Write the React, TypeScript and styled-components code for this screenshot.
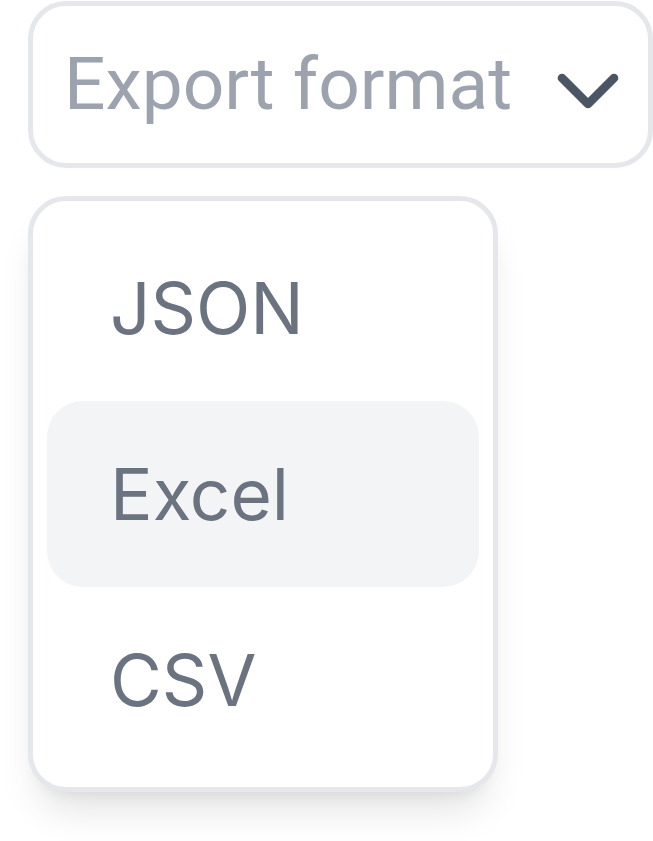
import styled, { createGlobalStyle } from 'styled-components';
import { ChevronDown } from 'lucide-react';

const GlobalStyle = createGlobalStyle`
  html, body {
    margin: 0;
    padding: 0;
    background: #ffffff;
  }
`;

const options = ['JSON', 'Excel', 'CSV'];

const Page = styled.div`
  min-height: 100vh;
  box-sizing: border-box;
  padding: 1px 0 0 28px;
  display: flex;
  flex-direction: column;
  gap: 28px;
  font-family: Inter, "Noto Sans", sans-serif;
`;

const Trigger = styled.button`
  box-sizing: border-box;
  width: 625px;
  height: 167px;
  border: 5px solid #e5e7eb;
  border-radius: 38px;
  background: #ffffff;
  display: flex;
  align-items: center;
  justify-content: space-between;
  padding: 0 8px 0 31px;
  cursor: pointer;
`;

const Placeholder = styled.span`
  font-family: Roboto, "Liberation Sans", sans-serif;
  font-size: 73px;
  color: #9ca3af;
  line-height: 1;
`;

const Chevron = styled(ChevronDown)`
  color: #4b5563;
  flex-shrink: 0;
  margin-top: 12px;
`;

const Menu = styled.ul`
  box-sizing: border-box;
  width: 470px;
  margin: 0;
  padding: 14px;
  list-style: none;
  border: 5px solid #e5e7eb;
  border-radius: 38px;
  background: #ffffff;
  box-shadow: 0 28px 40px -12px rgba(0, 0, 0, 0.12), 0 10px 16px -10px rgba(0, 0, 0, 0.08);
`;

const Item = styled.li<{ $active?: boolean }>`
  height: 186px;
  display: flex;
  align-items: center;
  padding-left: 63px;
  border-radius: 36px;
  background: ${p => (p.$active ? '#f3f4f6' : 'transparent')};
  color: #6b7280;
  font-size: 71px;
  line-height: 1;
`;

export default function App() {
  return (
    <>
      <GlobalStyle />
      <Page>
        <Trigger type="button">
          <Placeholder>Export format</Placeholder>
          <Chevron size={104} strokeWidth={2} />
        </Trigger>
        <Menu>
          {options.map(o => (
            <Item key={o} $active={o === 'Excel'}>
              {o}
            </Item>
          ))}
        </Menu>
      </Page>
    </>
  );
}
